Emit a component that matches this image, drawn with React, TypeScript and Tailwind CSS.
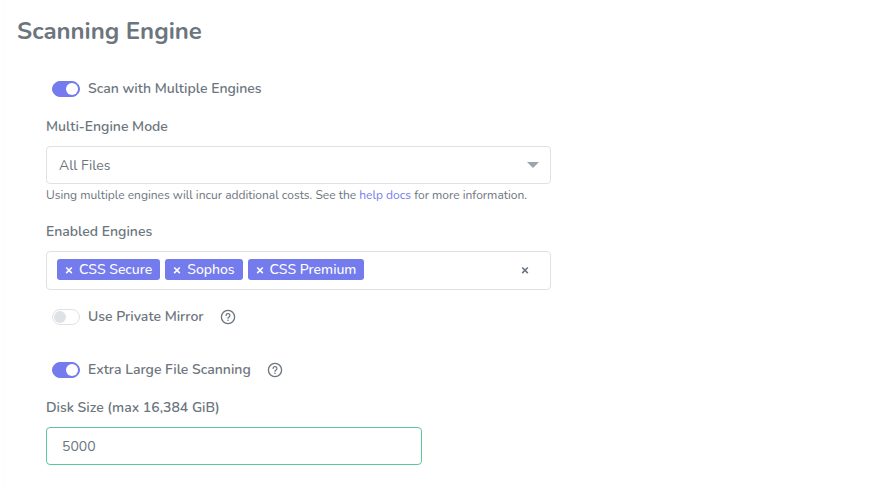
import React, { useState } from 'react';

interface SwitchFieldProps {
    id: string;
    label: string;
    defaultChecked?: boolean;
    help?: string;
}

const HelpIcon: React.FC = () => (
    <svg className="w-4 h-4" viewBox="0 0 16 16" fill="none" stroke="currentColor" strokeLinecap="round" aria-hidden="true">
        <circle cx="8" cy="8" r="6.6" strokeWidth="1.3" />
        <path d="M6.1 6.5a1.9 1.9 0 1 1 3 1.5C8.5 8.4 8 8.700 8 9.3" strokeWidth="1.2" />
        <circle cx="8" cy="11.2" r=".8" fill="currentColor" stroke="none" />
    </svg>
);

const CrossIcon: React.FC = () => (
    <svg className="w-2 h-2" viewBox="0 0 8 8" fill="none" stroke="currentColor" strokeWidth="1.6" aria-hidden="true">
        <path d="M1.2 1.5l5.600 5.600M6.800 1.500L1.200 7.100" />
    </svg>
);

const SwitchField: React.FC<SwitchFieldProps> = ({ id, label, defaultChecked, help }) => (
    <div className="flex items-center h-6 pl-1.5">
        <input
            id={id}
            type="checkbox"
            role="switch"
            defaultChecked={defaultChecked}
            className="appearance-none flex items-center shrink-0 w-7 h-4 p-px rounded-full border border-[#dee2e6] bg-white cursor-pointer before:block before:w-3 before:h-3 before:rounded-full before:bg-[#dee2e6] checked:bg-[#747bec] checked:border-[#747bec] checked:before:bg-white checked:before:translate-x-3"
        />
        <label htmlFor={id} className="pl-2 font-semibold cursor-pointer">{label}</label>
        {help && (
            <button type="button" aria-label={help} className="ml-4 cursor-pointer">
                <HelpIcon />
            </button>
        )}
    </div>
);

const App: React.FC = () => {
    const [engines, setEngines] = useState(['CSS Secure', 'Sophos', 'CSS Premium']);

    return (
        <main className="ml-1 border-l border-[#fcfcfc] bg-white pl-3 pr-4 pt-[15px] pb-5 font-['Nunito','Noto_Sans',sans-serif] text-sm leading-5 text-[#6c757d]">
            <h1 className="text-2xl leading-8 font-bold">Scanning Engine</h1>

            <form className="flex flex-col w-full max-w-[534px] pl-[29px] pt-[30px]">
                <SwitchField id="multi-engine" label="Scan with Multiple Engines" defaultChecked />

                <label htmlFor="mode" className="mt-4 font-semibold">Multi-Engine Mode</label>
                <div className="grid items-center mt-[9px]">
                    <select
                        id="mode"
                        className="col-start-1 row-start-1 appearance-none w-full h-[38px] px-3 pt-px rounded border border-[#dee2e6] bg-white"
                    >
                        <option>All Files</option>
                        <option>Large Files Only</option>
                    </select>
                    <svg className="col-start-1 row-start-1 justify-self-end mr-3 w-3 h-1.5 pointer-events-none" viewBox="0 0 12 6" aria-hidden="true">
                        <path d="M0 0h12L6 6z" fill="#98a6ad" />
                    </svg>
                </div>
                <p className="mt-[3px] text-xs leading-4">
                    Using multiple engines will incur additional costs. See the{' '}
                    <a href="#help" className="text-[#747bec]">help docs</a> for more information.
                </p>

                <label htmlFor="engines" className="mt-[19px] font-semibold">Enabled Engines</label>
                <div className="flex items-center mt-[9px] h-[39px] pl-2.5 pr-[21px] pb-[2px] rounded border border-[#dee2e6]">
                    <div className="flex gap-[5px]">
                        {engines.map((engine) => (
                            <span key={engine} className="flex items-center h-[21px] px-2 gap-1.5 rounded-[3px] bg-[#747bec] text-white font-medium whitespace-nowrap">
                                <button
                                    type="button"
                                    aria-label={`Remove ${engine}`}
                                    onClick={() => setEngines(engines.filter((e) => e !== engine))}
                                >
                                    <CrossIcon />
                                </button>
                                {engine}
                            </span>
                        ))}
                    </div>
                    <input id="engines" type="text" className="flex-1 min-w-0 outline-none" />
                    <button type="button" aria-label="Clear engines" onClick={() => setEngines([])}>
                        <CrossIcon />
                    </button>
                </div>

                <div className="flex flex-col gap-[29px] mt-[15px]">
                    <SwitchField id="private-mirror" label="Use Private Mirror" help="About private mirrors" />
                    <SwitchField id="extra-large" label="Extra Large File Scanning" help="About extra large file scanning" defaultChecked />
                </div>

                <label htmlFor="disk-size" className="mt-4 font-semibold">Disk Size (max 16,384 GiB)</label>
                <input
                    id="disk-size"
                    type="text"
                    inputMode="numeric"
                    defaultValue="5000"
                    className="mt-[9px] w-full max-w-[376px] h-[38px] px-[15px] rounded border border-[#5ac99a] outline-none"
                />
            </form>
        </main>
    );
};

export default App;
